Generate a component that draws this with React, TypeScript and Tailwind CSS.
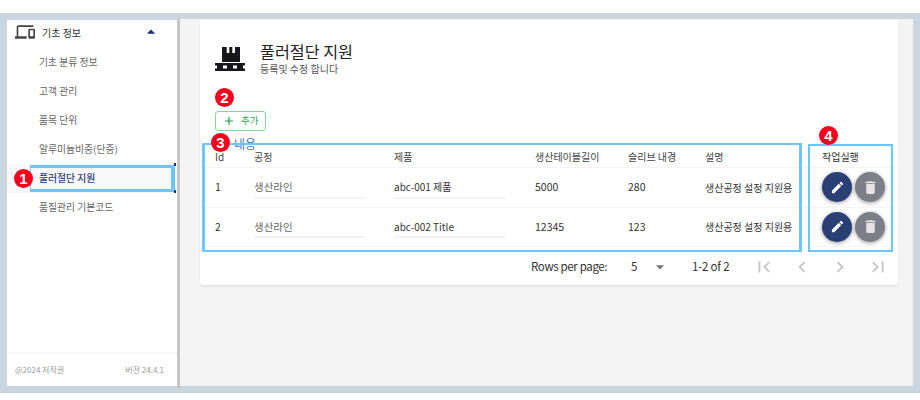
import React from "react";
import { MdOutlineDevices, MdArrowDropUp, MdArrowDropDown, MdEdit, MdDelete, MdFirstPage, MdLastPage, MdChevronLeft, MdChevronRight, MdAdd } from "react-icons/md";

const items = ["기초 분류 정보", "고객 관리", "품목 단위", "알루미늄비중(단중)", "풀러절단 지원", "품질관리 기본코드"];
const cols = "grid grid-cols-[39px_140px_141px_93px_77px_117px_1fr] items-center pl-[12px]";

function Badge({ n, className }: { n: string; className: string }) {
  return (
    <span className={"absolute z-20 flex h-[19px] w-[19px] items-center justify-center rounded-full bg-[#f4001f] text-[15px] font-bold leading-none text-white [font-family:'Liberation_Sans',sans-serif] " + className}>
      {n}
    </span>
  );
}

function Row({ id, title, len, inner }: { id: string; title: string; len: string; inner: string }) {
  return (
    <div className={cols + " h-[39.5px] border-b border-[#f4f4f4] text-[10px] text-[#333]"}>
      <span className="text-[10.5px]">{id}</span>
      <span className="w-[111px] self-stretch pt-[11px] pb-[8px] text-[10.5px] text-[#666]"><span className="block h-full border-b-2 border-[#f2f2f2]">생산라인</span></span>
      <span className="w-[111px] self-stretch pt-[11px] pb-[8px]"><span className="block h-full border-b-2 border-[#f2f2f2]">{title}</span></span>
      <span className="text-[10.5px]">{len}</span>
      <span className="text-[10.5px]">{inner}</span>
      <span className="whitespace-nowrap">생산공정 설정 지원용</span>
      <span className="flex gap-[3px]">
        <span className="flex h-[30px] w-[30px] items-center justify-center rounded-full bg-[#2a4074] text-white shadow-[0_1px_4px_rgba(0,0,0,0.4)]"><MdEdit size={15} /></span>
        <span className="flex h-[30px] w-[30px] items-center justify-center rounded-full bg-[#7c7e88] text-[#e4e4e6] shadow-[0_1px_4px_rgba(0,0,0,0.4)]"><MdDelete size={17} /></span>
      </span>
    </div>
  );
}

export default function App() {
  return (
    <div className="relative h-[400px] w-[920px] overflow-hidden bg-white pt-[13px] [font-family:'Noto_Sans_CJK_KR','Noto_Sans',sans-serif]">
      <div className="flex h-[380px] bg-[#c9d6df] p-[7px]">
        <aside className="flex w-[170px] flex-col bg-white">
          <div className="flex h-[24px] items-center pl-[8px] pr-[16px] text-[10px] text-[#333]">
            <MdOutlineDevices size={20} className="text-[#444]" />
            <span className="ml-[7px] flex-1 pt-px">기초 정보</span>
            <MdArrowDropUp size={20} className="text-[#1d3370]" />
          </div>
          <ul className="pt-[4px]">
            {items.map((t, i) => (
              <li key={t} className={"flex h-[29px] items-center pl-[32px] text-[9.8px] " + (i === 4 ? "bg-[#f8f8f8] font-medium text-[#2a3f75]" : "text-[#666]")}>{t}</li>
            ))}
          </ul>
          <div className="mt-auto flex h-[34px] items-center justify-between border-t-2 border-[#f5f5f5] pl-[8px] pr-[13px] text-[8px] text-[#999]">
            <span>@2024 저작권</span>
            <span>버전 24.4.1</span>
          </div>
        </aside>
        <div className="-my-[2px] w-[3px] bg-[#c4c6c8]" />
        <main className="-mt-px flex-1 bg-[#f3f3f3] pl-[20px] pr-[15px]">
          <section className="mt-px h-[266px] rounded-b-[4px] border-b border-[#e4e4e8] bg-white pl-[3px] shadow-[0_1px_2px_rgba(0,0,0,0.06)]">
            <div className="flex items-center pl-[12px] pt-[22px]">
              <svg width="30" height="24" viewBox="0 0 30 24" fill="#16161c" className="shrink-0">
                <path d="M7 0h4.7v6h2.6V0h3v6H20V0h5v15H7z" />
                <path d="M0 16h30v2.5H0zM2 18.5h6v3H2zM12 18.5h6v3h-6zM22 18.5h6v3h-6zM0 21.5h30V24H0z" />
              </svg>
              <div className="ml-[15px]">
                <h1 className="text-[16.2px] leading-[19px] text-[#222]">풀러절단 지원</h1>
                <p className="mt-px text-[10px] leading-[13px] text-[#555]">등록및 수정 합니다</p>
              </div>
            </div>
            <button className="ml-[12px] mt-[36px] flex h-[20px] w-[51px] items-center rounded-[3px] border border-[#82d79b] pl-[6px] text-[9.5px] text-[#2fa653]">
              <MdAdd size={14} className="text-[#1e9e46]" />
              <span className="ml-[5px] -mt-[2px]">추가</span>
            </button>
            <div className="ml-[31px] mt-[7px] h-[12px] text-[12px] leading-[12px] text-[#3b73b5]">내용</div>
            <div className={cols + " box-content h-[13px] border-b border-[#f4f4f4] pb-[4px] text-[10px] leading-[13px] text-[#444]"}>
              <span>Id</span>
              <span>공정</span>
              <span>제품</span>
              <span>생산테이블길이</span>
              <span>슬리브 내경</span>
              <span>설명</span>
              <span className="text-[#333]">작업실행</span>
            </div>
            <Row id="1" title="abc-001 제품" len="5000" inner="280" />
            <Row id="2" title="abc-002 Title" len="12345" inner="123" />
            <div className="flex h-[39px] items-center text-[11.5px] text-[#333]">
              <span className="ml-[328px] w-[100px] whitespace-nowrap tracking-[-0.35px]">Rows per page:</span>
              <span className="w-[19px]">5</span>
              <MdArrowDropDown size={20} className="text-[#777]" />
              <span className="ml-[22px] w-[40px] whitespace-nowrap tracking-[-0.2px]">1-2 of 2</span>
              <span className="ml-[21px] flex items-center gap-[16px] text-[#c4c4c4]">
                <MdFirstPage size={22} />
                <MdChevronLeft size={22} />
                <MdChevronRight size={22} />
                <MdLastPage size={22} />
              </span>
            </div>
          </section>
        </main>
      </div>

      <div className="absolute left-[30px] top-[165px] z-10 h-[27px] w-[145px] border-y-[3px] border-l border-r-[4px] border-[#6ec6ff]" />
      <div className="absolute left-[174px] top-[163px] z-10 h-[3px] w-[2px] bg-[#1d3370]" />
      <div className="absolute left-[174px] top-[190px] z-10 h-[3px] w-[2px] bg-[#1d3370]" />
      <div className="absolute left-[202px] top-[143px] z-10 h-[109px] w-[600px] border-[2px] border-l-[3px] border-r-[3px] border-[#6ec6ff]" />
      <div className="absolute left-[808px] top-[144px] z-10 h-[108px] w-[85px] border-[2px] border-[#6ec6ff]" />
      <Badge n="1" className="left-[14px] top-[169px]" />
      <Badge n="2" className="left-[215px] top-[88px]" />
      <Badge n="3" className="left-[211px] top-[133px]" />
      <Badge n="4" className="left-[819px] top-[126px]" />
    </div>
  );
}
